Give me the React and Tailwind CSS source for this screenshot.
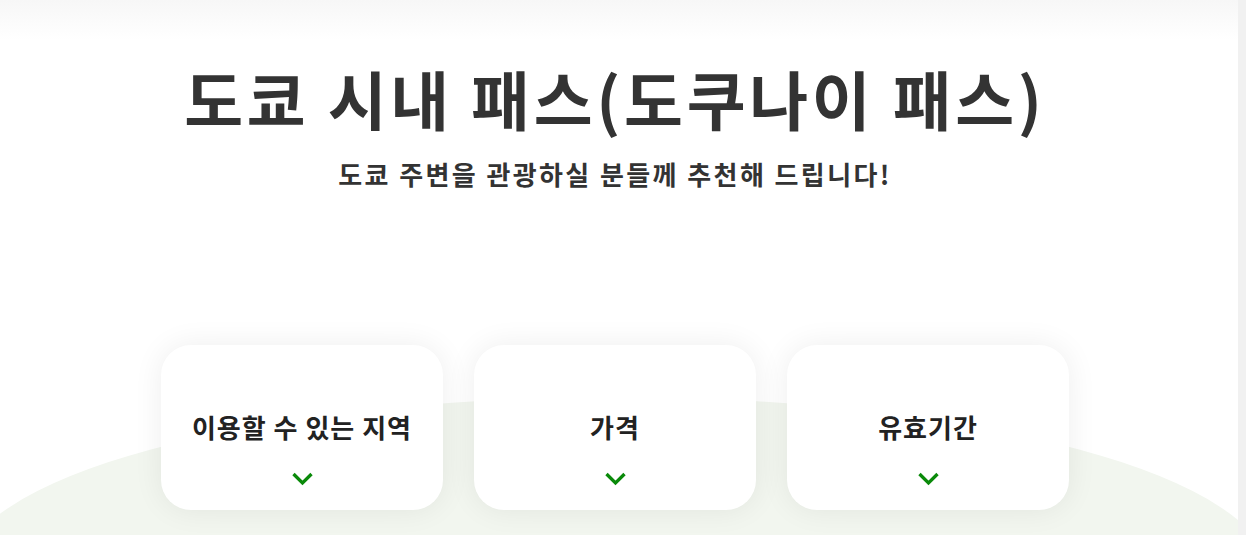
import React from 'react';

const cards = ['이용할 수 있는 지역', '가격', '유효기간'];

const Chevron = () => (
    <svg width="23" height="15" viewBox="0 0 23 15" fill="none">
        <path d="M2.5 3l9 9 9-9" stroke="#0a8a0a" strokeWidth="3.3" strokeLinecap="butt" />
    </svg>
);

const App = () => {
    return (
        <div className="flex h-[535px] w-[1246px] overflow-hidden bg-white" style={{ fontFamily: '"Noto Sans CJK KR", "Noto Sans", sans-serif' }}>
            <div className="relative flex-1 overflow-hidden">
                {/* background ellipse */}
                <div className="absolute left-[-40px] top-[397px] h-[356px] w-[1310px] rounded-[50%] bg-[#f2f6ef]" />
                {/* top shade */}
                <div className="absolute inset-x-0 top-0 h-10 bg-gradient-to-b from-[#f7f7f7] to-white" />

                <div className="relative flex flex-col items-center pr-[8px]">
                    <h1 className="mt-[55px] text-[64px] font-bold leading-[84px] tracking-[3.7px] text-[#333]">
                        도쿄 시내 패스(도쿠나이 패스)
                    </h1>
                    <p className="mt-[17px] text-[26px] font-bold leading-[36px] tracking-[2.4px] text-[#333]">
                        도쿄 주변을 관광하실 분들께 추천해 드립니다!
                    </p>

                    <div className="mt-[153px] flex gap-[31px]">
                        {cards.map((c) => (
                            <div
                                key={c}
                                className="flex h-[165px] w-[282px] flex-col items-center rounded-[30px] bg-white shadow-[0_0_30px_rgba(0,0,0,0.07)]"
                            >
                                <span className="mt-[64px] text-[26px] font-bold leading-[36px] tracking-[1px] text-[#222]">{c}</span>
                                <span className="mt-[26px] flex"><Chevron /></span>
                            </div>
                        ))}
                    </div>
                </div>
            </div>
            <div className="w-[8px] bg-[#f1f1f1]" />
        </div>
    );
};

export default App;
